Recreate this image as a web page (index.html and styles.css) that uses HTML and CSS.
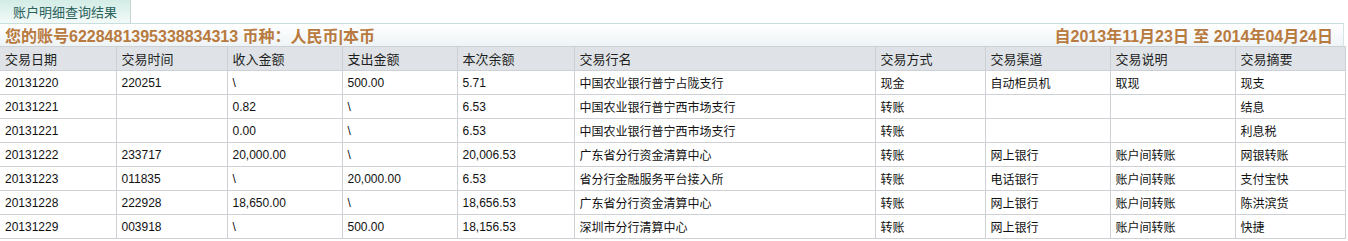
FILE: index.html
```html
<!DOCTYPE html>
<html lang="zh-CN">
<head>
<meta charset="utf-8">
<title>账户明细查询结果</title>
<link rel="stylesheet" href="styles.css">
</head>
<body>
<div class="page">
  <div class="tabs">
    <div class="tab">账户明细查询结果</div>
  </div>
  <div class="titlebar">
    <span class="acct">您的账号6228481395338834313 币种：人民币|本币</span>
    <span class="range">自2013年11月23日 至 2014年04月24日</span>
  </div>
  <table class="grid">
    <colgroup>
      <col style="width:116px"><col style="width:111px"><col style="width:115px"><col style="width:115px"><col style="width:117px"><col style="width:301px"><col style="width:110px"><col style="width:125px"><col style="width:125px"><col style="width:110px">
    </colgroup>
    <thead>
      <tr><th>交易日期</th><th>交易时间</th><th>收入金额</th><th>支出金额</th><th>本次余额</th><th>交易行名</th><th>交易方式</th><th>交易渠道</th><th>交易说明</th><th>交易摘要</th></tr>
    </thead>
    <tbody>
      <tr><td>20131220</td><td>220251</td><td>\</td><td>500.00</td><td>5.71</td><td>中国农业银行普宁占陇支行</td><td>现金</td><td>自动柜员机</td><td>取现</td><td>现支</td></tr>
      <tr><td>20131221</td><td></td><td>0.82</td><td>\</td><td>6.53</td><td>中国农业银行普宁西市场支行</td><td>转账</td><td></td><td></td><td>结息</td></tr>
      <tr><td>20131221</td><td></td><td>0.00</td><td>\</td><td>6.53</td><td>中国农业银行普宁西市场支行</td><td>转账</td><td></td><td></td><td>利息税</td></tr>
      <tr><td>20131222</td><td>233717</td><td>20,000.00</td><td>\</td><td>20,006.53</td><td>广东省分行资金清算中心</td><td>转账</td><td>网上银行</td><td>账户间转账</td><td>网银转账</td></tr>
      <tr><td>20131223</td><td>011835</td><td>\</td><td>20,000.00</td><td>6.53</td><td>省分行金融服务平台接入所</td><td>转账</td><td>电话银行</td><td>账户间转账</td><td>支付宝快</td></tr>
      <tr><td>20131228</td><td>222928</td><td>18,650.00</td><td>\</td><td>18,656.53</td><td>广东省分行资金清算中心</td><td>转账</td><td>网上银行</td><td>账户间转账</td><td>陈洪滨货</td></tr>
      <tr><td>20131229</td><td>003918</td><td>\</td><td>500.00</td><td>18,156.53</td><td>深圳市分行清算中心</td><td>转账</td><td>网上银行</td><td>账户间转账</td><td>快捷</td></tr>
    </tbody>
  </table>
</div>
</body>
</html>
```
FILE: styles.css
```css
* { box-sizing: border-box; }
html, body { margin: 0; padding: 0; background: #ffffff; }
body {
  font-family: "Liberation Sans", Arial, "Noto Sans CJK SC", sans-serif;
  font-size: 12px;
  color: #1a1a1a;
}
.page { width: 1344px; }
.tabs { display: flex; height: 23px; }
.tab {
  width: 131px;
  height: 23px;
  padding: 3px 0 0 13px;
  font-family: "Noto Sans CJK SC", sans-serif;
  font-size: 13px;
  line-height: 17px;
  color: #2a625c;
  background: linear-gradient(#d3ece6, #f3faf8);
  border-right: 1px solid #c5d6d3;
}
.titlebar {
  display: flex;
  justify-content: space-between;
  align-items: center;
  height: 23px;
  border-top: 1px solid #c6dede;
  border-right: 1px solid #d6e4e6;
  background: linear-gradient(#ffffff, #eef4f6);
  padding: 0 10px 0 5px;
  font-family: "Liberation Sans", Arial, "Noto Sans CJK SC", sans-serif;
  font-weight: bold;
  font-size: 16px;
  color: #b87a3e;
}
.grid {
  border-collapse: collapse;
  table-layout: fixed;
  width: 1344px;
}
.grid th, .grid td {
  height: 24px;
  padding: 0 0 0 5px;
  text-align: left;
  border: 1px solid #cdd1d5;
  border-left: none;
  font-family: "Liberation Sans", Arial, "Noto Sans CJK SC", sans-serif;
  white-space: nowrap;
  overflow: hidden;
}
.grid thead th {
  background: #dfe3e7;
  font-weight: normal;
  font-size: 13px;
  color: #1e1e1e;
  border-top: 1px solid #cdd1d5;
}
.grid td { font-size: 12px; color: #111; }
```
